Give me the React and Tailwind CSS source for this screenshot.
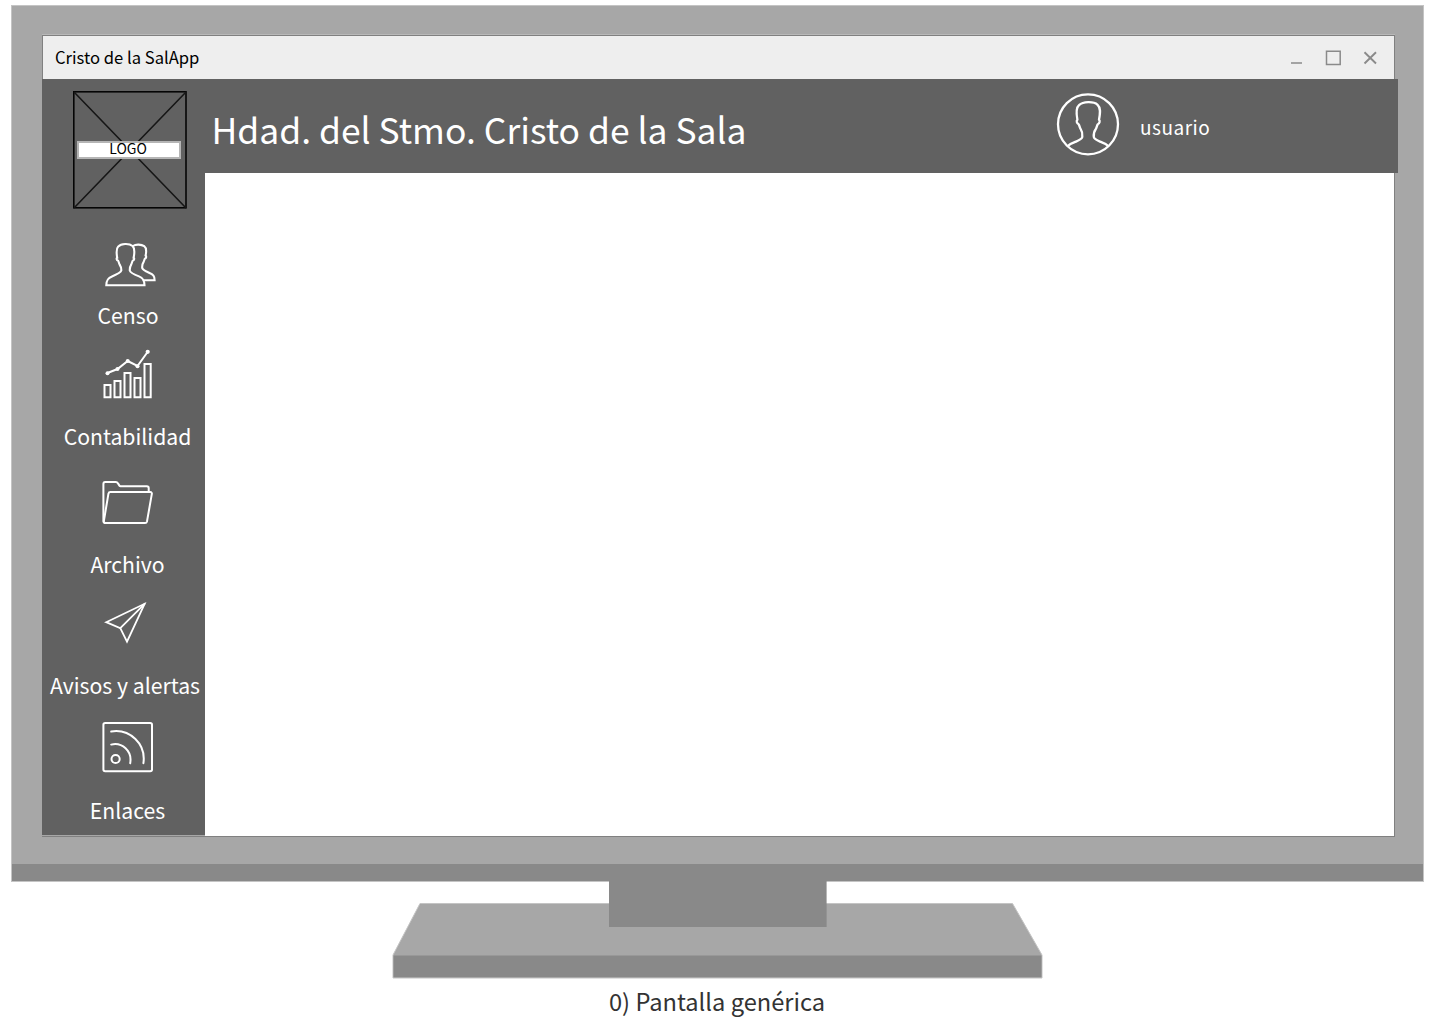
import React from "react";

const stroke = { fill: "none", stroke: "#fff", strokeWidth: 2, strokeLinejoin: "round", strokeLinecap: "round" };

function CensusIcon() {
  return (
    <svg className="block h-[60px] w-[60px]" viewBox="98 236 60 60" {...stroke} strokeWidth="2.1" strokeLinejoin="miter" strokeLinecap="butt">
      <path d="M106.3 285.2C106.3 279.8 108.2 277.9 112 276.4C117 274.4 120.8 272.6 121.3 270.6C121.5 267.4 120.8 266.4 119.6 264.6C118.6 262.6 118.6 261 118 260.6C116.6 260.2 116.2 258.2 117.2 257.8C116.2 252 116.4 248.4 118.2 246.6C121 243.4 129 243 132.6 246C135 248.4 134.8 252 133.6 257.8C134.6 258.2 134.2 260.2 132.8 260.6C132.2 261 132.2 262.6 131.2 264.6C130 266.4 129.6 267.4 129.8 270.6C130.2 272.6 134 274.4 139 276.4C142.8 277.9 144.5 279.8 144.5 285.2Z" />
      <path d="M133 246C136 243.9 141.4 244.4 144.2 246.2C147 248.2 146.4 252 145.6 255.6C146.6 256.2 146.2 258.2 145 258.6C144.4 259.2 144.2 261 143.4 262.4C142 264.4 142 265.4 142.2 268C142.6 269.8 145 271 149 272.8C153.4 274.8 154.6 276 154.6 280.2H142.6" />
    </svg>
  );
}

function ChartIcon() {
  return (
    <svg className="block h-[60px] w-[60px]" viewBox="98 344 60 60" {...stroke} strokeLinejoin="miter">
      <path d="M104.5 385H110.5V397.3H104.5ZM114.5 381H120.5V397.3H114.5ZM124.5 373H130.5V397.3H124.5ZM134.5 378H140.5V397.3H134.5ZM144.5 364H150.7V397.3H144.5Z" />
      <path d="M107.5 373L117.5 369L127.7 361L137.5 366L147.6 352" />
      <g fill="#fff" stroke="none">
        <circle cx="107.5" cy="373.2" r="2" />
        <circle cx="117.5" cy="369" r="2" />
        <circle cx="127.7" cy="361" r="2" />
        <circle cx="137.5" cy="366.2" r="2" />
        <circle cx="147.7" cy="351.8" r="2.1" />
      </g>
    </svg>
  );
}

function FolderIcon() {
  return (
    <svg className="block h-[60px] w-[60px]" viewBox="98 474 60 60" {...stroke} strokeWidth="2">
      <path d="M104.6 523C103.6 522.8 103.4 522 103.4 521V484C103.4 482.8 104 482.1 105.2 482.1H115.8C117 482.1 117.4 482.4 118 483.4L119.4 485.6Q119.8 486.2 120.6 486.2H146.8C148.2 486.2 148.7 486.8 148.7 488V491.6" />
      <path d="M110.4 492.1H150.2C151.6 492.1 152.1 493 151.8 494.2L147 521.4C146.7 522.6 146.2 523 145 523H105.4C104 523 103.6 522 103.9 520.8L108.4 493.8C108.7 492.6 109.2 492.1 110.4 492.1Z" />
    </svg>
  );
}

function PlaneIcon() {
  return (
    <svg className="block h-[60px] w-[60px]" viewBox="98 592 60 60" {...stroke} strokeLinejoin="miter" strokeWidth="1.8">
      <path d="M106.2 622.2L144.6 603.8L127 641.6L120.3 628.2Z" />
      <path d="M120.3 628.2L144.6 603.8" />
    </svg>
  );
}

function FeedIcon() {
  return (
    <svg className="block h-[60px] w-[60px]" viewBox="98 717 60 60" {...stroke} strokeWidth="2">
      <rect x="103.4" y="723" width="48.6" height="48.3" rx="1.8" />
      <circle cx="115.6" cy="759" r="4.1" />
      <path d="M111.2 744.6C122 742 132.4 751 130.2 763.2M111.2 731.5C130 728.6 146.2 744 143.4 763.2" />
    </svg>
  );
}

function UserIcon() {
  return (
    <svg className="block h-[66px] w-[66px]" viewBox="1055 91 66 66" {...stroke} strokeWidth="2.3" strokeLinecap="butt">
      <circle cx="1088" cy="124.3" r="30" />
      <path d="M1068 145.8C1070.4 143.6 1073 142.9 1076 141.6C1079.4 140.2 1081.8 138.6 1082.3 137C1082.7 133 1082.2 131.4 1080.7 129.2C1079.4 127 1079.6 125.4 1078.6 124.2C1076.6 123.4 1076.2 120.6 1077.4 119.8C1076 112.4 1076.2 107.6 1079 105.2C1083 101.4 1093.6 101.2 1097.6 104.8C1100.8 107.6 1100.4 112.4 1099 119.8C1100.2 120.6 1099.8 123.4 1097.8 124.2C1096.8 125.4 1097 127 1095.7 129.2C1094 131.4 1093.4 133 1093.8 137C1094.2 138.6 1096.6 140.2 1100 141.6C1103 142.9 1105.6 143.6 1108 145.8" />
    </svg>
  );
}

function NavItem({ icon, label, iconClass, labelClass }) {
  return (
    <li className="flex w-full flex-col items-center">
      <span className={iconClass}>{icon}</span>
      <span className={"whitespace-nowrap text-[21.2px] leading-[30px] " + labelClass}>{label}</span>
    </li>
  );
}

export default function App() {
  return (
    <main className="flex h-[1018px] w-[1440px] flex-col overflow-hidden bg-white pt-[5px] font-['Noto_Sans_CJK_JP','Noto_Sans_CJK_SC',sans-serif]">
      <div className="ml-[11px] h-[877px] w-[1413px] shrink-0 border border-[#c4c4c4] bg-[#a7a7a7]">
        <div className="flex h-full flex-col justify-between">
          <section className="ml-[30px] mt-[29px] flex h-[802px] w-[1353px] flex-col border border-[#808080] bg-white shadow-[0_-1px_0_#b8b8b8]">
            <header className="flex h-[43px] shrink-0 items-center justify-between bg-[#eeeeee] pl-3 pr-4 text-black">
              <h2 className="mb-[2px] whitespace-nowrap text-[16.6px] leading-[24px]">Cristo de la SalApp</h2>
              <svg className="block h-[20px] w-[90px]" viewBox="1288 48 90 20" fill="none" stroke="#8a8a8a" strokeWidth="1.5">
                <path d="M1291 63H1302" />
                <path d="M1326.5 51.3H1340.2V64.5H1326.5Z" />
                <path d="M1364.5 52.2L1376 63.5M1376 52.2L1364.5 63.5" strokeWidth="1.9" />
              </svg>
            </header>
            <div className="-ml-px flex h-[757px] w-[1356px]">
              <nav className="flex h-[757px] w-[163px] shrink-0 flex-col items-center border-b border-[#a7a7a7] bg-[#616161] pt-3 text-white">
                <div className="ml-[13px] grid h-[118px] w-[114px] shrink-0 place-items-center">
                  <svg className="col-start-1 row-start-1 block h-[118px] w-[114px]" viewBox="0 0 114 118" fill="none" stroke="#161616" strokeWidth="1.6">
                    <rect x="0.8" y="0.8" width="112.2" height="116" stroke="#050505" />
                    <path d="M1 1L113 117M113 1L1 117" />
                  </svg>
                  <span className="z-10 col-start-1 row-start-1 mr-[2px] h-[18px] w-[104px] border-2 border-[#b5b5b5] bg-white pr-[2px] text-center text-[14px] leading-[11px] text-black">LOGO</span>
                </div>
                <ul className="flex w-full flex-col">
                  <NavItem icon={<CensusIcon />} label="Censo" iconClass="mt-[27px] ml-[9px]" labelClass="mt-[4px] ml-[9px]" />
                  <NavItem icon={<ChartIcon />} label="Contabilidad" iconClass="mt-[14px] ml-[9px]" labelClass="mt-[17px] ml-[8px]" />
                  <NavItem icon={<FolderIcon />} label="Archivo" iconClass="mt-[23px] ml-[9px]" labelClass="mt-[15px] ml-[8px]" />
                  <NavItem icon={<PlaneIcon />} label="Avisos y alertas" iconClass="mt-[13px] ml-[9px]" labelClass="mt-[18px] ml-[3px]" />
                  <NavItem icon={<FeedIcon />} label="Enlaces" iconClass="mt-[17px] ml-[9px]" labelClass="mt-[18px] ml-[8px]" />
                </ul>
              </nav>
              <div className="flex h-[94px] w-[1193px] items-start bg-[#616161] text-white">
                <h1 className="ml-[6.5px] mt-[20px] w-[843.5px] whitespace-nowrap text-[35.45px] leading-[60px]">Hdad. del Stmo. Cristo de la Sala</h1>
                <div className="flex">
                  <div className="mt-3"><UserIcon /></div>
                  <span className="ml-[19px] mt-[33px] text-[19px] leading-[30px] tracking-[0.5px]">usuario</span>
                </div>
              </div>
            </div>
          </section>
          <div className="h-[17px] bg-[#898989]" />
        </div>
      </div>
      <svg className="-mt-px ml-[392px] block h-[98px] w-[652px] shrink-0" viewBox="392 881 652 98">
        <path d="M420 903.5H1012.5L1042 955V978H393V955Z" fill="#a7a7a7" stroke="#c4c4c4" strokeWidth="1" />
        <path d="M393.5 955.5H1041.5V977.3H393.5Z" fill="#898989" />
        <path d="M609 880H826.6V927H609Z" fill="#898989" />
      </svg>
      <p className="ml-[609px] mt-[5px] whitespace-nowrap text-[23.65px] leading-[34px] text-[#333]">0) Pantalla genérica</p>
    </main>
  );
}
